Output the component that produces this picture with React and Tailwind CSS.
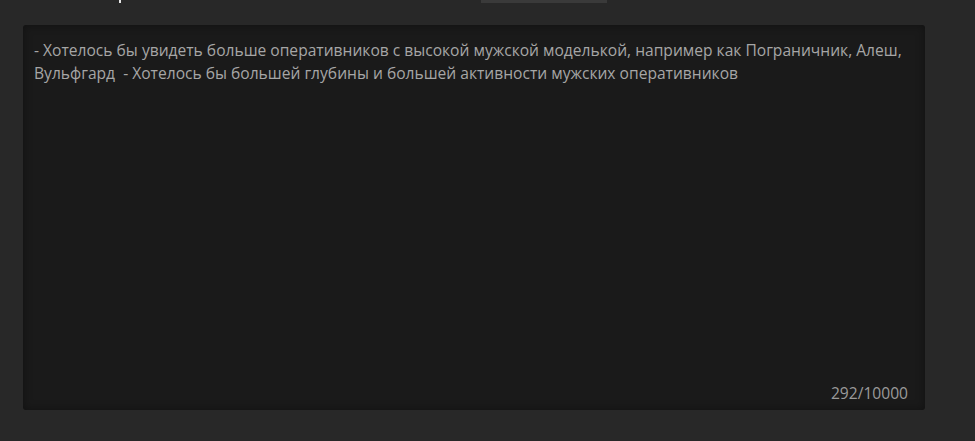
export default function App() {
  const font = { fontFamily: "'Open Sans', 'Noto Sans', sans-serif" };
  return (
    <div className="relative w-[975px] h-[441px] overflow-hidden bg-[#282828]" style={font}>
      {/* header remnants cut off by the viewport */}
      <div className="flex h-[25px] items-start">
        <div className="ml-[119px] w-[2px] h-[3px] bg-[#e6e6e6]" />
        <div className="ml-[360px] w-[126px] h-[3px] bg-[#3a3a3a]" />
      </div>

      <div className="ml-[23px] w-[902px] h-[385px] rounded-[3px] bg-[#1a1a1a] shadow-[inset_0_0_10px_rgba(0,0,0,0.35)] flex flex-col">
        <div className="flex-1 px-[11px] pt-[14px] text-[15.6px] leading-[23px] text-[#a6a6a6]">
          <div className="whitespace-nowrap">- Хотелось бы увидеть больше оперативников с высокой мужской моделькой, например как Пограничник, Алеш,</div>
          <div className="whitespace-pre">Вульфгард  - Хотелось бы большей глубины и большей активности мужских оперативников</div>
        </div>
        <div className="self-end pr-[17px] pb-[5px] text-[15.6px] leading-[23px] text-[#9a9a9a]">292/10000</div>
      </div>
    </div>
  );
}
